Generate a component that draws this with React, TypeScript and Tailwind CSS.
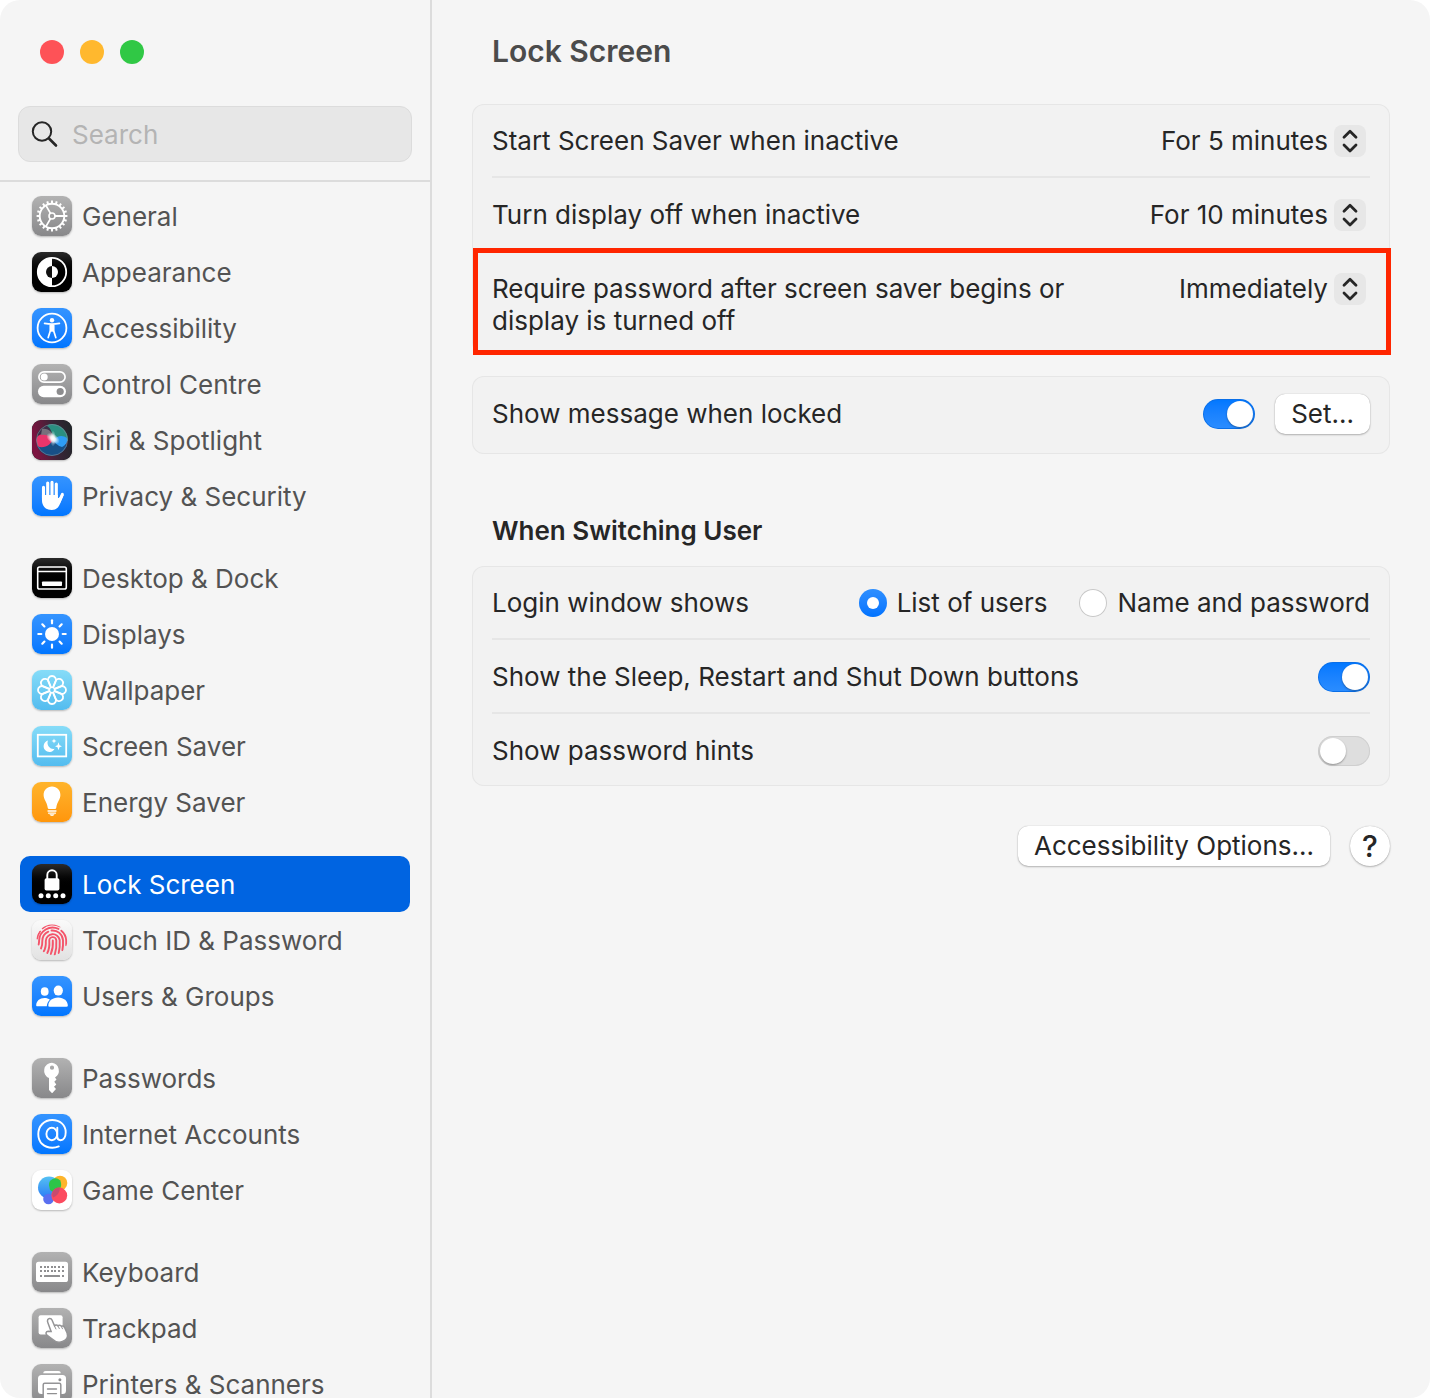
import { useState, type ReactNode } from "react";

const around = (n: number) => Array.from({ length: n }, (_, i) => (360 / n) * i);

function Glyph({ children }: { children: ReactNode }) {
  return (
    <svg viewBox="0 0 40 40" className="size-10" fill="none" stroke="none" aria-hidden="true">
      {children}
    </svg>
  );
}

const GearGlyph = () => (
  <Glyph>
    <g stroke="#fff">
      <circle cx="20" cy="20" r="12.3" strokeWidth="1.9" />
      {around(20).map((a) => (
        <path key={a} d="M20 7.6V4.6" strokeWidth="2" transform={`rotate(${a} 20 20)`} />
      ))}
      <circle cx="20" cy="20" r="3" strokeWidth="1.6" />
      <path d="M23 20h9M18.5 17.4 14 9.6M18.5 22.6 14 30.4" strokeWidth="1.8" />
    </g>
  </Glyph>
);

const AppearanceGlyph = () => (
  <Glyph>
    <circle cx="20" cy="20" r="14.2" stroke="#fff" strokeWidth="1.8" />
    <path d="M20 5.8a14.2 14.2 0 0 0 0 28.4z" fill="#fff" />
    <path d="M20 14a6 6 0 0 0 0 12z" fill="#111" />
    <path d="M20 14a6 6 0 0 1 0 12z" fill="#fff" />
  </Glyph>
);

const AccessibilityGlyph = () => (
  <Glyph>
    <circle cx="20" cy="20" r="14.4" stroke="#fff" strokeWidth="1.8" />
    <circle cx="20" cy="12.2" r="2.2" fill="#fff" />
    <path
      d="M12.6 15.4c2.4.5 4.8.8 7.4.8s5-.3 7.4-.8M20 17v6M18.4 17.4v5.2l-2.2 7M21.6 17.4v5.2l2.2 7"
      stroke="#fff"
      strokeWidth="1.7"
      strokeLinecap="round"
    />
    <path d="M17.8 16.4h4.4v6.8h-4.4z" fill="#fff" />
  </Glyph>
);

const ControlGlyph = () => (
  <Glyph>
    <rect x="6.9" y="7.9" width="26.2" height="10.2" rx="5.1" stroke="#fff" strokeWidth="1.7" />
    <circle cx="12.2" cy="13" r="3.5" fill="#fff" />
    <rect x="6" y="21.8" width="28" height="11.4" rx="5.7" fill="#fff" />
    <circle cx="28.2" cy="27.5" r="3.6" fill="#8c8c8e" />
  </Glyph>
);

const SiriGlyph = () => (
  <Glyph>
    <defs>
      <linearGradient id="siri-bg" x1="0" y1=".2" x2="1" y2="0">
        <stop offset="0" stopColor="#7c1440" />
        <stop offset=".5" stopColor="#3a2436" />
        <stop offset="1" stopColor="#1e2628" />
      </linearGradient>
      <radialGradient id="siri-glow">
        <stop offset="0" stopColor="#fff" />
        <stop offset=".4" stopColor="#fff" stopOpacity=".8" />
        <stop offset="1" stopColor="#fff" stopOpacity="0" />
      </radialGradient>
      <clipPath id="siri-orb">
        <circle cx="20" cy="20" r="16" />
      </clipPath>
    </defs>
    <rect width="40" height="40" rx="9" fill="url(#siri-bg)" />
    <g clipPath="url(#siri-orb)">
      <rect width="40" height="40" fill="#3a3048" />
      <path d="M17 4c11-2 20 4 20 17l-15-1C20 13 19 8 15 6z" fill="#2a8f80" />
      <path d="M4 26c6 1 12-3 17-6 5 3 10 6 15 5-3 8-12 12-20 11S5 31 4 26z" fill="#174f86" />
      <path d="M5 17c5-5 13-4 16 2-2 5-6 9-14 8-3-3-3-7-2-10z" fill="#e8356b" />
      <path d="M21 20c5-5 10-5 14-2 1 4-1 7-5 9-4-1-7-4-9-7z" fill="#2e9df5" />
      <path d="M10 9c7-1 11 4 12 10-4-3-9-5-13-4z" fill="#77707c" />
    </g>
    <circle cx="20" cy="20" r="15.5" stroke="#7d8d99" strokeOpacity=".7" strokeWidth=".9" />
    <ellipse cx="21" cy="18.5" rx="7.5" ry="4.6" fill="url(#siri-glow)" transform="rotate(35 21 18.500)" />
    <ellipse cx="21" cy="18.5" rx="3" ry="8" fill="url(#siri-glow)" opacity=".7" />
  </Glyph>
);

const HandGlyph = () => (
  <Glyph>
    <g stroke="#fff" strokeLinecap="round">
      <path d="M11.5 11.4V22M15.7 7v15M20 6.3V22M24.3 8v15" strokeWidth="3.1" />
      <path d="M30.4 18.4 27 26" strokeWidth="3" />
    </g>
    <path
      d="M9.950 19h15.900v3.200c.8 0 1.800-.8 2.400-2l1.400-2.800 2 1.800-3.600 8.600C26.600 31.600 24 34 19.800 34 13.500 34 9.950 30 9.950 24z"
      fill="#fff"
    />
  </Glyph>
);

const DockGlyph = () => (
  <Glyph>
    <rect x="5.7" y="9" width="28.6" height="22" rx="1.8" stroke="#fff" strokeWidth="1.6" />
    <path d="M6 13.5h28" stroke="#fff" strokeWidth="1.4" />
    <rect x="10" y="23.5" width="20" height="4.5" rx=".8" fill="#fff" />
  </Glyph>
);

const SunGlyph = () => (
  <Glyph>
    <circle cx="20" cy="20" r="7" fill="#fff" />
    {around(8).map((a) => (
      <path
        key={a}
        d="M20 9.300V6.300"
        stroke="#fff"
        strokeWidth="2.200"
        strokeLinecap="round"
        transform={`rotate(${a} 20 20)`}
      />
    ))}
  </Glyph>
);

const FlowerGlyph = () => (
  <Glyph>
    {around(8).map((a) => (
      <path
        key={a}
        d="M18.900 17.200 16.300 11.500a4 4 0 1 1 7.400 0L21.100 17.200"
        stroke="#fff"
        strokeWidth="1.800"
        transform={`rotate(${a} 20 20)`}
      />
    ))}
    <circle cx="20" cy="20" r="2.600" stroke="#fff" strokeWidth="1.400" />
  </Glyph>
);

const ScreenSaverGlyph = () => (
  <Glyph>
    <rect x="5.8" y="8.8" width="28.400" height="21.600" stroke="#fff" strokeWidth="1.800" />
    <path d="M16 14.600a5.800 5.800 0 1 0 6.600 8.200A6 6 0 0 1 16 14.600z" fill="#fff" />
    <path
      d="m22 12.500.7 1.800 1.800.7-1.800.7-.7 1.800-.7-1.800-1.800-.7 1.800-.7zM26.500 16.300l1 3 2.500 1-2.500 1-1 3-1-3-2.500-1 2.500-1z"
      fill="#fff"
    />
  </Glyph>
);

const BulbGlyph = () => (
  <Glyph>
    <path
      d="M20 4.600c-5 0-8.400 3.700-8.400 8.400 0 4.600 3.300 6.400 4.200 13 .1.700.5 1 1.200 1h6c.7 0 1.100-.3 1.200-1 .9-6.600 4.200-8.400 4.200-13 0-4.700-3.400-8.400-8.400-8.400z"
      fill="#fff"
    />
    <path d="M16 29h8M16.600 31.200h6.800" stroke="#fff" strokeWidth="1.300" strokeLinecap="round" />
    <path d="M17.500 32.300h5c-.4 1-1.400 1.600-2.500 1.600s-2.100-.6-2.500-1.600z" fill="#fff" />
  </Glyph>
);

const LockGlyph = () => (
  <Glyph>
    <path d="M15.300 15.500V11a4.700 4.700 0 0 1 9.400 0v4.500" stroke="#fff" strokeWidth="1.900" />
    <rect x="12.600" y="14.300" width="14.800" height="12.200" rx="1.800" fill="#fff" />
    <g fill="#fff">
      <circle cx="9" cy="31.800" r="2.500" />
      <circle cx="16.300" cy="31.800" r="2.500" />
      <circle cx="23.700" cy="31.800" r="2.500" />
      <circle cx="31" cy="31.800" r="2.500" />
    </g>
  </Glyph>
);

const FingerprintGlyph = () => (
  <Glyph>
    <clipPath id="finger-disc">
      <circle cx="20" cy="20" r="15.500" />
    </clipPath>
    <g clipPath="url(#finger-disc)" stroke="#f4546a" strokeWidth="1.900" strokeLinecap="round">
      <path d="M20.800 20.500c.4 5-.3 9.500-2 13.500" />
      <path d="M15.300 33c2.100-4 2.300-8 2-12a3.500 3.500 0 0 1 7-.7c.4 5 0 9.500-1.600 14.500" />
      <path d="M11.800 31.200c2-3.200 2.200-6.700 2-10.200a7 7 0 0 1 13.900-1c.3 4.700 0 9-1 13" />
      <path d="M9 28.500c1.200-2.300 1.400-4.800 1.300-7.500a10.400 10.400 0 0 1 6-9.300M19.500 10.500A10.400 10.400 0 0 1 31 20.200c.2 3.800 0 7-.6 10" />
      <path d="M6.600 24.500c.4-1.300.5-2.700.5-4A13.500 13.500 0 0 1 26.500 8.900M29.300 10.700a13.500 13.500 0 0 1 4.900 9.500v5" />
      <path d="M5 18.500c.4-2.800 1.500-5 3-7M10.500 8.300A15.500 15.500 0 0 1 28 6.400" />
    </g>
  </Glyph>
);

const UsersGlyph = () => (
  <Glyph>
    <g fill="#fff">
      <ellipse cx="12.700" cy="15.500" rx="3.900" ry="4.300" />
      <path d="M4.200 29.200c0-4 3.400-7.200 8.300-7.200 2.200 0 4 .7 5.400 1.700-1.700 1.500-2.900 3.600-3.100 6.600H5.200c-.7 0-1-.4-1-1.100z" />
      <ellipse cx="26.300" cy="14.600" rx="4.600" ry="5" />
      <path d="M16.300 29.500c0-4.500 4-8.100 9.800-8.100s9.700 3.600 9.700 8.100c0 .8-.4 1.200-1.200 1.200H17.500c-.8 0-1.200-.4-1.200-1.200z" />
    </g>
  </Glyph>
);

const KeyGlyph = () => (
  <Glyph>
    <path
      fillRule="evenodd"
      d="M20 4.800a7.900 7.900 0 0 0-3 15.200v12l2.600 2.700c.3.300.7.300 1 0l3.400-3.600-2-2.300 2.300-2.400-2-2.700 2.200-2.300-1.500-2A7.900 7.900 0 0 0 20 4.800zm0 2.800a2.100 2.100 0 1 1 0 4.200 2.100 2.100 0 0 1 0-4.200z"
      fill="#fff"
    />
  </Glyph>
);

const AtGlyph = () => (
  <Glyph>
    <g stroke="#fff" strokeWidth="1.900" strokeLinecap="round">
      <path d="M26.800 32.400c-2 .9-4.200 1.400-6.500 1.400C12 33.800 6.300 28.300 6.300 20.200 6.300 12 12.200 6 20.200 6 28 6 33.700 11 33.700 18.300c0 4.700-2 7.900-5.100 7.900-2.100 0-3.300-1.300-3.300-3.400v-9" />
      <ellipse cx="19.800" cy="20" rx="5.400" ry="6.200" />
    </g>
  </Glyph>
);

const GameGlyph = () => (
  <Glyph>
    <defs>
      <linearGradient id="bubble-blue" x1="0" y1="0" x2="0" y2="1">
        <stop offset="0" stopColor="#55c1f3" />
        <stop offset="1" stopColor="#2b7bf6" />
      </linearGradient>
    </defs>
    <circle cx="28" cy="13" r="7.300" fill="#fdb52c" />
    <circle cx="17" cy="17.500" r="11" fill="url(#bubble-blue)" />
    <circle cx="16.500" cy="29" r="5.300" fill="#5a6ff0" />
    <path d="M17 15.500a6.500 6.500 0 0 1 11-5.300c2 3.500 1.400 8.300-2 11-3 1.800-6 .8-8-1.500z" fill="#2dc548" />
    <circle cx="27.300" cy="25.500" r="7.900" fill="#fc4b5f" />
    <path d="M20.600 21.400a7.900 7.900 0 0 1 7.300-3.800 11 11 0 0 1-6.700 10 7.900 7.900 0 0 1-.6-6.200z" fill="#c94a6e" />
  </Glyph>
);

const KeyboardGlyph = () => (
  <Glyph>
    <rect x="4" y="9.800" width="32" height="20.200" rx="2.600" fill="#fff" />
    <g fill="#8f8f91">
      {[8, 12, 15, 19, 22, 26, 30].map((x) => (
        <g key={x}>
          <rect x={x} y="14" width="2" height="2" />
          <rect x={x} y="18" width="2" height="2" />
        </g>
      ))}
      <rect x="8" y="23" width="2" height="2" />
      <rect x="12" y="23" width="16" height="2" rx=".5" />
      <rect x="30" y="23" width="2" height="2" />
    </g>
  </Glyph>
);

const TrackpadGlyph = () => (
  <Glyph>
    <rect x="6.600" y="7.300" width="24" height="19.200" rx="2" fill="#fff" />
    <path
      d="M15.700 11.700c.9-1.800 3.500-1.600 4.300.3l2.500 5.800c.8-1.100 2.500-1.200 3.400-.1 1-.9 2.700-.7 3.500.5 1.300-.6 2.800.1 3.300 1.500l2.400 5.300c1.300 4-1 7.200-4.600 8.500-4.200 1.600-7.600.2-10.300-2.500l-5.300-4c-1.600-1.200-1-3.800 1.200-3.800l3 .2-3.200-8.600c-.5-1.100-.6-2.100-.2-3.100z"
      fill="#fff"
      stroke="#949496"
      strokeWidth="1.500"
    />
    <path d="M22.600 18.200l1.300 2.800M26 18l1.300 2.600M29.500 18.800l1 2" stroke="#949496" strokeWidth="1" strokeLinecap="round" />
  </Glyph>
);

const PrinterGlyph = () => (
  <Glyph>
    <path d="M11.300 9.300c0-1.600.8-2.400 2.400-2.400h12.600c1.600 0 2.400.8 2.400 2.400z" fill="#fff" />
    <rect x="6" y="11" width="28" height="19" rx="3.500" fill="#fff" />
    <circle cx="27.900" cy="15.800" r="1.500" fill="#8f8f91" />
    <rect x="11.200" y="19.300" width="17.600" height="16" rx="1.500" fill="#fff" stroke="#949496" strokeWidth="1.500" />
    <path d="M15.500 25h9M15.500 29.600h9" stroke="#8f8f91" strokeWidth="1.400" strokeLinecap="round" />
  </Glyph>
);

const tiles = {
  gray: "bg-linear-to-b from-[#b2b2b2] to-[#88888a]",
  black: "bg-linear-to-b from-[#2b2b2b] to-black to-60%",
  blue: "bg-linear-to-b from-[#3494ff] to-[#0076ff]",
  sky: "bg-linear-to-b from-[#86dcf8] to-[#53bcef]",
  orange: "bg-linear-to-b from-[#ffb42b] to-[#ff960a]",
  light: "bg-linear-to-b from-[#fafafa] to-[#e2e2e2]",
  white: "bg-white",
};

type Item = { label: string; tile: keyof typeof tiles; glyph: () => ReactNode };

const groups: Item[][] = [
  [
    { label: "General", tile: "gray", glyph: GearGlyph },
    { label: "Appearance", tile: "black", glyph: AppearanceGlyph },
    { label: "Accessibility", tile: "blue", glyph: AccessibilityGlyph },
    { label: "Control Centre", tile: "gray", glyph: ControlGlyph },
    { label: "Siri & Spotlight", tile: "black", glyph: SiriGlyph },
    { label: "Privacy & Security", tile: "blue", glyph: HandGlyph },
  ],
  [
    { label: "Desktop & Dock", tile: "black", glyph: DockGlyph },
    { label: "Displays", tile: "blue", glyph: SunGlyph },
    { label: "Wallpaper", tile: "sky", glyph: FlowerGlyph },
    { label: "Screen Saver", tile: "sky", glyph: ScreenSaverGlyph },
    { label: "Energy Saver", tile: "orange", glyph: BulbGlyph },
  ],
  [
    { label: "Lock Screen", tile: "black", glyph: LockGlyph },
    { label: "Touch ID & Password", tile: "light", glyph: FingerprintGlyph },
    { label: "Users & Groups", tile: "blue", glyph: UsersGlyph },
  ],
  [
    { label: "Passwords", tile: "gray", glyph: KeyGlyph },
    { label: "Internet Accounts", tile: "blue", glyph: AtGlyph },
    { label: "Game Center", tile: "white", glyph: GameGlyph },
  ],
  [
    { label: "Keyboard", tile: "gray", glyph: KeyboardGlyph },
    { label: "Trackpad", tile: "gray", glyph: TrackpadGlyph },
    { label: "Printers & Scanners", tile: "gray", glyph: PrinterGlyph },
  ],
];

function Sidebar({ selected, onSelect }: { selected: string; onSelect: (label: string) => void }) {
  return (
    <aside className="flex w-[432px] shrink-0 flex-col border-r-2 border-[#dcdcdc]">
      <div className="flex gap-4 px-10 pt-10">
        <button type="button" aria-label="Close" className="size-6 rounded-full bg-[#fe5257]" />
        <button type="button" aria-label="Minimise" className="size-6 rounded-full bg-[#ffb82e]" />
        <button type="button" aria-label="Zoom" className="size-6 rounded-full bg-[#30c845]" />
      </div>
      <div className="border-b-2 border-[#dcdcdc] px-[18px] pt-[42px] pb-[18px]">
        <label className="flex h-14 items-center gap-[13px] rounded-xl border border-[#dcdcdc] bg-[#e7e7e7] px-3">
          <svg
            viewBox="0 0 28 28"
            className="size-7 shrink-0"
            fill="none"
            stroke="#262626"
            strokeLinecap="round"
            aria-hidden="true"
          >
            <circle cx="11" cy="11.500" r="9.200" strokeWidth="2" />
            <path d="m18 18.500 7 7" strokeWidth="2.600" />
          </svg>
          <input
            type="search"
            aria-label="Search"
            placeholder="Search"
            className="w-full min-w-0 bg-transparent pt-0.5 outline-none placeholder:text-[#b4b4b4]"
          />
        </label>
      </div>
      <nav aria-label="Settings" className="flex min-h-0 flex-1 flex-col gap-[26px] overflow-hidden px-5 pt-[6px]">
        {groups.map((group) => (
          <ul key={group[0].label} className="shrink-0">
            {group.map(({ label, tile, glyph: Icon }) => (
              <li key={label}>
                <a
                  href="#"
                  aria-current={label === selected ? "page" : undefined}
                  onClick={(e) => {
                    e.preventDefault();
                    onSelect(label);
                  }}
                  className={`flex h-14 items-center gap-[10px] rounded-[10px] pl-3 ${
                    label === selected ? "bg-[#0064e1] text-white" : "text-[#535353]"
                  }`}
                >
                  <span
                    className={`flex size-10 shrink-0 items-center justify-center overflow-hidden rounded-[9px] shadow-[0_1px_2px_rgba(0,0,0,0.25)] ${tiles[tile]}`}
                  >
                    <Icon />
                  </span>
                  <span className="pt-0.5 whitespace-nowrap">{label}</span>
                </a>
              </li>
            ))}
          </ul>
        ))}
      </nav>
    </aside>
  );
}

function Card({ children, className = "" }: { children: ReactNode; className?: string }) {
  return (
    <div
      className={`divide-y-2 divide-[#e6e6e6] rounded-xl bg-[#f2f2f2] px-5 inset-ring inset-ring-[#e6e6e6] ${className}`}
    >
      {children}
    </div>
  );
}

const rowStyle = "flex items-center justify-between gap-6 pt-0.5";

function Picker({ id, options }: { id: string; options: string[] }) {
  return (
    <span className="relative mr-1 flex shrink-0 items-center">
      <select
        id={id}
        className="field-sizing-content h-8 appearance-none bg-transparent pr-[38px] text-right outline-none"
      >
        {options.map((option) => (
          <option key={option}>{option}</option>
        ))}
      </select>
      <span className="pointer-events-none absolute right-0 flex size-8 items-center justify-center rounded-lg bg-[#e7e7e7]">
        <svg
          viewBox="0 0 32 32"
          className="size-8"
          fill="none"
          stroke="#262626"
          strokeWidth="2.800"
          strokeLinecap="round"
          strokeLinejoin="round"
          aria-hidden="true"
        >
          <path d="m10 12.300 6-6 6 6M10 20l6 6 6-6" />
        </svg>
      </span>
    </span>
  );
}

function Switch({ id, on = false }: { id: string; on?: boolean }) {
  return (
    <input
      id={id}
      type="checkbox"
      role="switch"
      defaultChecked={on}
      className="flex h-[30px] w-[52px] shrink-0 appearance-none items-center rounded-full bg-[#dedede] px-0.5 inset-ring inset-ring-[#cfcfcf] before:size-[26px] before:rounded-full before:bg-white before:shadow-[0_1px_2px_rgba(0,0,0,0.35)] checked:justify-end checked:bg-linear-to-b checked:from-[#0077ff] checked:to-[#2b8dff] checked:inset-ring-[#0a6fe8]"
    />
  );
}

function Radio({ label, on = false }: { label: string; on?: boolean }) {
  return (
    <label className="flex items-center gap-[10px]">
      <input
        type="radio"
        name="login-window"
        defaultChecked={on}
        className="flex size-7 shrink-0 appearance-none items-center justify-center rounded-full bg-white inset-ring inset-ring-[#c8c8c8] checked:bg-linear-to-b checked:from-[#2e8fff] checked:to-[#0073ff] checked:inset-ring-0 checked:before:size-3 checked:before:rounded-full checked:before:bg-white"
      />
      {label}
    </label>
  );
}

const buttonStyle = "bg-white shadow-[0_0_1px_rgba(0,0,0,0.3),0_1px_2px_rgba(0,0,0,0.25)]";

export default function App() {
  const [selected, setSelected] = useState("Lock Screen");

  return (
    <div className="h-screen bg-white">
      <div className="flex h-full overflow-hidden rounded-[20px] bg-[#f5f5f5] font-[Inter,'Liberation_Sans',sans-serif] text-[26px] leading-8 text-[#262626]">
        <Sidebar selected={selected} onSelect={setSelected} />

        <main className="min-w-0 flex-1 overflow-hidden px-10 pt-[31px]">
          <h1 className="pl-5 text-[30px] leading-10 font-semibold text-[#4b4b4b]">Lock Screen</h1>

          <Card className="mt-[33px]">
            <div className={`min-h-[74px] ${rowStyle}`}>
              <label htmlFor="screen-saver">Start Screen Saver when inactive</label>
              <Picker id="screen-saver" options={["For 5 minutes", "For 10 minutes", "Never"]} />
            </div>
            <div className={`min-h-[74px] ${rowStyle}`}>
              <label htmlFor="display-off">Turn display off when inactive</label>
              <Picker id="display-off" options={["For 10 minutes", "For 5 minutes", "Never"]} />
            </div>
            <div className="relative flex items-start justify-between gap-6 pt-[21px] pb-[17px]">
              <label htmlFor="require-password" className="max-w-[600px]">
                Require password after screen saver begins or display is turned off
              </label>
              <Picker id="require-password" options={["Immediately", "After 5 minutes", "Never"]} />
              <div className="pointer-events-none absolute -top-1 -right-[21px] -bottom-px -left-[19px] border-5 border-[#ff2600]" />
            </div>
          </Card>

          <Card className="mt-[22px]">
            <div className="flex min-h-[78px] items-center justify-between gap-6 pb-0.5">
              <label htmlFor="show-message">Show message when locked</label>
              <span className="flex items-center gap-5">
                <Switch id="show-message" on />
                <button type="button" className={`h-10 rounded-[10px] px-4 ${buttonStyle}`}>
                  Set...
                </button>
              </span>
            </div>
          </Card>

          <h2 id="switching-user" className="mt-[61px] pl-5 leading-8 font-semibold">
            When Switching User
          </h2>

          <Card className="mt-[19px]">
            <div role="radiogroup" aria-labelledby="login-window" className={`min-h-[74px] ${rowStyle}`}>
              <span id="login-window">Login window shows</span>
              <div className="flex gap-8">
                <Radio label="List of users" on />
                <Radio label="Name and password" />
              </div>
            </div>
            <div className={`min-h-[74px] ${rowStyle}`}>
              <label htmlFor="power-buttons">Show the Sleep, Restart and Shut Down buttons</label>
              <Switch id="power-buttons" on />
            </div>
            <div className={`min-h-[72px] ${rowStyle}`}>
              <label htmlFor="password-hints">Show password hints</label>
              <Switch id="password-hints" />
            </div>
          </Card>

          <div className="mt-10 flex justify-end gap-5">
            <button type="button" className={`h-10 rounded-[10px] px-4 ${buttonStyle}`}>
              Accessibility Options...
            </button>
            <button
              type="button"
              aria-label="Help"
              className={`size-10 rounded-full text-[30px] font-medium ${buttonStyle}`}
            >
              ?
            </button>
          </div>
        </main>
      </div>
    </div>
  );
}
